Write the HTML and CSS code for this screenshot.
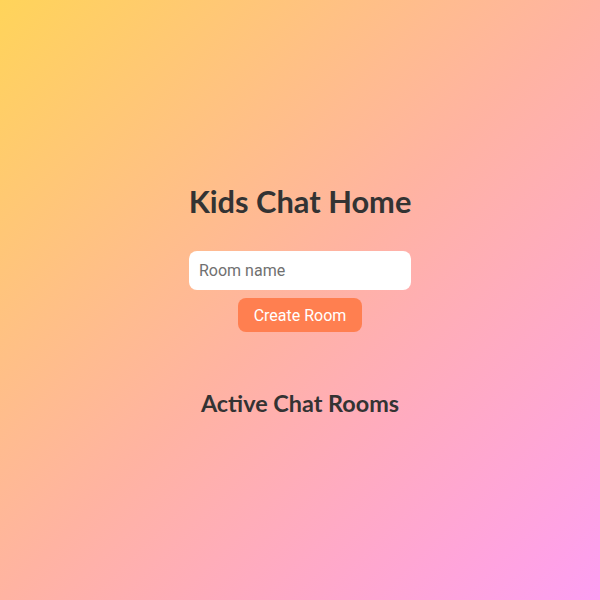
FILE: index.html
```html
<!DOCTYPE html>
<html>
<head>
<meta charset="utf-8">
<link rel="stylesheet" href="styles.css">
</head>
<body>
<main class="home">
  <h1 class="title">Kids Chat Home</h1>
  <div class="create">
    <input class="room-input" type="text" placeholder="Room name">
    <button class="create-btn">Create Room</button>
  </div>
  <h2 class="subtitle">Active Chat Rooms</h2>
  <ul class="rooms"></ul>
</main>
</body>
</html>
```
FILE: styles.css
```css
html, body {
  margin: 0;
  height: 100%;
}
body {
  background: linear-gradient(135deg, #ffd45a 0%, #ffb3a2 50%, #ff9ef2 100%);
  font-family: Roboto, "Liberation Sans", sans-serif;
  color: #333;
}
.home {
  display: flex;
  flex-direction: column;
  align-items: center;
  padding-top: 182px;
}
.title {
  margin: 0;
  font-family: Lato, "Open Sans", sans-serif;
  font-weight: 700;
  font-size: 30.8px;
  line-height: 40px;
  color: #333;
}
.create {
  margin-top: 29px;
  display: flex;
  flex-direction: column;
  align-items: center;
  gap: 8px;
}
.room-input {
  box-sizing: border-box;
  width: 222px;
  height: 39px;
  border: none;
  border-radius: 8px;
  background: #fff;
  padding: 0 10px;
  font-family: Roboto, sans-serif;
  font-size: 16px;
  color: #333;
  outline: none;
}
.room-input::placeholder {
  color: #707070;
}
.create-btn {
  width: 124px;
  height: 34px;
  border: none;
  border-radius: 8px;
  background: #ff7f50;
  color: #fff;
  font-family: Roboto, sans-serif;
  font-size: 16px;
  padding: 0;
}
.subtitle {
  margin: 55px 0 0;
  font-family: Lato, "Open Sans", sans-serif;
  font-weight: 700;
  font-size: 23.4px;
  line-height: 32px;
  color: #333;
}
.rooms {
  list-style: none;
  margin: 0;
  padding: 0;
}
```
